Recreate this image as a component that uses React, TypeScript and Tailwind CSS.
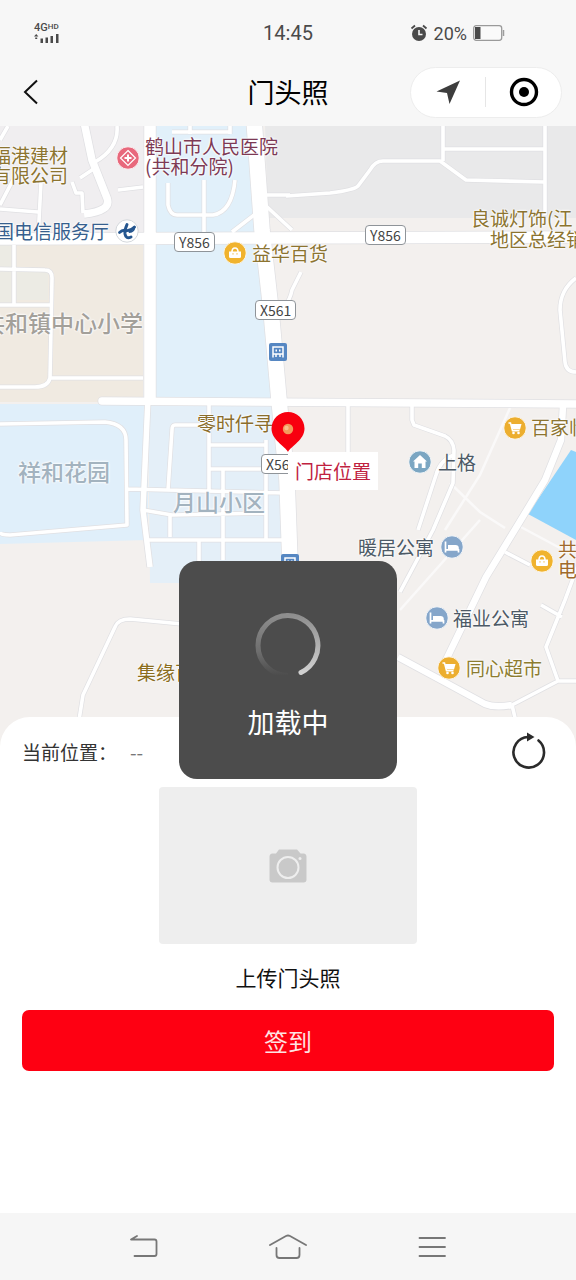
import type { ReactNode } from "react"

type IconKind = "hospital" | "telecom" | "bag" | "cart" | "home" | "bed"

const HALO = "[text-shadow:0_0_2px_#fff,0_0_2px_#fff,0_0_3px_#fff]"

const AREAS = [
  { d: "M265 126H576V218H268Z", fill: "#e9e9ea" },
  { d: "M0 126H145V235H0Z", fill: "#f0eef0" },
  { d: "M0 245H143V402H0Z", fill: "#f0eae1" },
  { d: "M0 245H14V304H0ZM16 272H48V300H16Z", fill: "#ecebe4" },
  { d: "M156 126H250L264 300L275 398H156Z", fill: "#e1f0fa" },
  { d: "M0 404H148V540L0 544Z", fill: "#e0effa" },
  { d: "M148 404H280L288 583H150Z", fill: "#e4eff8" },
  { d: "M571 450L528 514L576 540V452Z", fill: "#8fd3fb" },
]

const THIN_ROADS = [
  "M117 126Q119 148 95 162M95 168L80 178M72 182L76 193H82L83 213M0 209L38 212M41 182L38 240M0 205L13 180M118 190L143 187M0 140L8 126",
  "M0 269L45 270Q52 270 52 278L50 378Q48 387 35 387H0M14 245V305M0 305H50M50 378L143 378",
  "M168 183V205Q170 215 177 215H213Q232 212 235 180M204 180V235M258 212L232 232M265 205L292 230M265 195H290M172 132H230M190 126V134M230 126V134",
  "M285 305Q290 300 292 290L301 272",
  "M286 196L330 193Q354 190 358 186L370 170Q375 161 383 161H440L466 180L544 182M443 126V161M443 149H544M545 126V215",
  "M576 278Q560 290 560 310L565 362Q566 372 576 372",
  "M0 424L105 422Q126 424 126 440L127 525L10 535Q0 535 0 532",
  "M127 489L285 493M143 510L172 515L265 513M205 425H175Q172 425 172 430L168 490M209 402V490M209 445H265M209 469H265M223 470V560M266 440V540M170 515V537M148 540H285M199 540V562",
  "M348 406V452M412 406V420L414 425L445 436Q453 440 454 450L453 483L433 530L400 592M454 455Q440 460 436 475L418 530",
  "M505 552L530 565M541 605L562 617M512 705L516 722M512 705L558 681H576M558 681L546 647L565 600L578 565",
  "M79 720L83 695L115 627Q118 619 130 619L182 624",
]

const PALE_ROADS = "M510 408L480 475L445 530M450 483L480 512L505 528M519 526L560 548M480 520L440 565L400 610"

const LABELS: { text: string; at: string; tone: string }[] = [
  { text: "福港建材\n有限公司", at: "left-[-8px] top-[19px]", tone: "text-[19px] text-[#8c7430]" },
  { text: "鹤山市人民医院\n(共和分院)", at: "left-[145px] top-[10px]", tone: "text-[19px] text-[#7d3a55]" },
  { text: "中国电信服务厅", at: "left-[-24px] top-[95px]", tone: "text-[19px] text-[#365f8e]" },
  { text: "益华百货", at: "left-[252px] top-[117px]", tone: "text-[19px] text-[#8c7430]" },
  { text: "良诚灯饰(江", at: "left-[471px] top-[82px]", tone: "text-[19px] text-[#8c7430]" },
  { text: "地区总经销", at: "left-[490px] top-[103px]", tone: "text-[19px] text-[#8c7430]" },
  { text: "零时仟寻", at: "left-[197px] top-[287px]", tone: "text-[19px] text-[#8a6d2c]" },
  { text: "百家临", at: "left-[531px] top-[291px]", tone: "text-[19px] text-[#8c7430]" },
  { text: "上格", at: "left-[438px] top-[326px]", tone: "text-[19px] text-[#4d5a66]" },
  { text: "暖居公寓", at: "left-[358px] top-[411px]", tone: "text-[19px] text-[#4d5a66]" },
  { text: "福业公寓", at: "left-[453px] top-[482px]", tone: "text-[19px] text-[#4d5a66]" },
  { text: "同心超市", at: "left-[466px] top-[532px]", tone: "text-[19px] text-[#8c7c30]" },
  { text: "共\n电", at: "left-[558px] top-[413px]", tone: "text-[19px] text-[#a06a2c]" },
  { text: "集缘百", at: "left-[137px] top-[536px]", tone: "text-[19px] text-[#8a6d1c]" },
  { text: "共和镇中心小学", at: "left-[-18px] top-[186px]", tone: "text-[23px] font-medium text-[#a3a09a]" },
  { text: "祥和花园", at: "left-[18px] top-[335px]", tone: "text-[23px] font-medium text-[#a3b3bf]" },
  { text: "月山小区", at: "left-[173px] top-[365px]", tone: "text-[23px] font-medium text-[#a3b3bf]" },
]

const POIS: { kind: IconKind; at: string }[] = [
  { kind: "hospital", at: "left-[116px] top-[20px]" },
  { kind: "telecom", at: "left-[115px] top-[93px]" },
  { kind: "bag", at: "left-[223px] top-[115px]" },
  { kind: "cart", at: "left-[503px] top-[290px]" },
  { kind: "home", at: "left-[408px] top-[324px]" },
  { kind: "bed", at: "left-[440px] top-[409px]" },
  { kind: "bag", at: "left-[530px] top-[423px]" },
  { kind: "bed", at: "left-[425px] top-[480px]" },
  { kind: "cart", at: "left-[437px] top-[530px]" },
]

const ROAD_SIGNS = [
  { text: "Y856", at: "left-[174px] top-[106px]" },
  { text: "Y856", at: "left-[365px] top-[99px]" },
  { text: "X561", at: "left-[255px] top-[174px]" },
  { text: "X561", at: "left-[261px] top-[328px]" },
]

const POI_FILL: Record<IconKind, string> = {
  hospital: "#e8687c",
  telecom: "#ffffff",
  bag: "#f0b32e",
  cart: "#ecae2f",
  home: "#7ba6c2",
  bed: "#85a6ca",
}

const POI_GLYPH: Record<IconKind, ReactNode> = {
  hospital: (
    <>
      <path d="M12 4.500L19.500 12L12 19.500L4.500 12Z" fill="#e8687c" stroke="#fff" strokeWidth="1.200" />
      <path d="M12 8.500V15.500M8.500 12H15.500" stroke="#fff" strokeWidth="2" />
    </>
  ),
  telecom: (
    <g fill="none" stroke="#25568f" strokeLinecap="round">
      <path d="M4.500 13.500Q7.500 10.500 11 11.500Q16 12 19.500 8" strokeWidth="2.800" />
      <path d="M12 5.500Q9.500 11 10 15Q11 20.500 16 18" strokeWidth="3" />
      <path d="M19.500 8Q19 13 14.500 13" strokeWidth="1.800" />
    </g>
  ),
  bag: (
    <>
      <path d="M6 10.500H18V15.500Q18 17 16.500 17H7.500Q6 17 6 15.500Z" fill="#fff" />
      <path d="M9 11Q9 7 12 7Q15 7 15 11" fill="none" stroke="#fff" strokeWidth="1.600" />
      <path d="M9.500 12.800H10.500M13.500 12.800H14.500" stroke="#f0b32e" strokeWidth="1.200" />
    </>
  ),
  cart: (
    <>
      <path d="M5.500 7H7.500L9.500 14.800H16.500" fill="none" stroke="#fff" strokeWidth="1.500" />
      <path d="M8 8H18.500L17 13.500H9.500Z" fill="#fff" />
      <circle cx="10.500" cy="17" r="1.300" fill="#fff" />
      <circle cx="15.500" cy="17" r="1.300" fill="#fff" />
    </>
  ),
  home: <path d="M12 5L19 11.500H17.500V18H13.800V13.500H10.200V18H6.500V11.500H5Z" fill="#fff" />,
  bed: (
    <>
      <path d="M5.500 6.500V17.500M5.500 14.800H18.500V17.500" fill="none" stroke="#fff" strokeWidth="1.700" />
      <path d="M8 10H15.500Q18.800 10 18.800 13V14.500H8Z" fill="#fff" />
    </>
  ),
}

function PoiIcon({ kind }: { kind: IconKind }) {
  return (
    <svg viewBox="0 0 24 24" className="size-6">
      <circle cx="12" cy="12" r="11.200" fill={POI_FILL[kind]} stroke={kind === "telecom" ? "#c9ced3" : "#fff"} strokeWidth="0.800" />
      {POI_GLYPH[kind]}
    </svg>
  )
}

function BusStop() {
  return (
    <svg viewBox="0 0 18 18" className="size-[18px]">
      <rect width="18" height="18" rx="2" fill="#5687c2" />
      <path d="M4 14.500V4H14V14.500M4 11H14M7 11V14M11 11V14" fill="none" stroke="#fff" strokeWidth="1.500" />
      <path d="M6.500 7.500H8M10 7.500H11.500" stroke="#fff" strokeWidth="1.800" />
    </svg>
  )
}

function MapDrawing() {
  return (
    <svg viewBox="0 126 576 622" preserveAspectRatio="xMinYMin slice" className="size-full" aria-hidden="true">
      <rect y="126" width="576" height="622" fill="#f3f0ee" />
      {AREAS.map((a) => (
        <path key={a.d} d={a.d} fill={a.fill} />
      ))}
      <path d={PALE_ROADS} fill="none" stroke="#faf9f9" strokeWidth="2.500" />
      <g fill="none" stroke="#e0e0e3" strokeLinejoin="round">
        <path d={THIN_ROADS.join("")} strokeWidth="5" />
        <path d="M84 122L92 160L107 198Q112 211 84 214" strokeWidth="9" />
        <path d="M563 406L561 440L545 480L519 523L486 577L446 660M398 657L450 685L485 704Q495 708 512 705" strokeWidth="8" />
        <path d="M148 398L143 510L150 567" strokeWidth="7" />
        <path d="M102 401L576 404" strokeWidth="9" strokeLinecap="round" />
        <path d="M0 239L576 237M150 120V400" strokeWidth="13" />
        <path d="M254 120L262 230L271 310L279 400L287 480L291 590" strokeWidth="17" />
      </g>
      <g fill="none" stroke="#fff" strokeLinejoin="round">
        <path d={THIN_ROADS.join("")} strokeWidth="3.600" />
        <path d="M84 122L92 160L107 198Q112 211 84 214" strokeWidth="7.500" />
        <path d="M563 406L561 440L545 480L519 523L486 577L446 660M398 657L450 685L485 704Q495 708 512 705" strokeWidth="6.500" />
        <path d="M148 398L143 510L150 567" strokeWidth="5.500" />
        <path d="M102 401L576 404" strokeWidth="7.500" strokeLinecap="round" />
        <path d="M0 239L576 237M150 120V400" strokeWidth="11.500" />
        <path d="M254 120L262 230L271 310L279 400L287 480L291 590" strokeWidth="15.500" />
      </g>
    </svg>
  )
}

function StoreMap() {
  return (
    <section aria-label="地图" className="relative h-[622px] overflow-hidden bg-[#f3f0ee]">
      <MapDrawing />
      <div className="absolute left-[269px] top-[217px]"><BusStop /></div>
      <div className="absolute left-[281px] top-[428px]"><BusStop /></div>
      {LABELS.map((l) => (
        <span key={l.text} className={`absolute whitespace-pre leading-5 ${HALO} ${l.at} ${l.tone}`}>
          {l.text}
        </span>
      ))}
      {POIS.map((p) => (
        <div key={p.at} className={`absolute ${p.at}`}>
          <PoiIcon kind={p.kind} />
        </div>
      ))}
      {ROAD_SIGNS.map((s) => (
        <span
          key={s.at}
          className={`absolute rounded-[4px] border border-[#8f9499] bg-white px-1 text-[14px] leading-[18px] text-[#444] ${s.at}`}
        >
          {s.text}
        </span>
      ))}
      <span className="absolute left-[288px] top-[326px] bg-white px-[7px] text-[19px] leading-[38px] text-[#c0213f]">
        门店位置
      </span>
      <svg viewBox="0 0 34 40" className="absolute left-[271px] top-[286px] h-10 w-[34px]">
        <path d="M17 40C14 34 0.500 28 0.500 16.500A16.500 16.500 0 0 1 33.500 16.500C33.500 28 20 34 17 40Z" fill="#f8000f" />
        <circle cx="17" cy="17" r="5.200" fill="#f39a5c" />
        <circle cx="15.500" cy="16" r="2.200" fill="#f9c08d" />
      </svg>
    </section>
  )
}

function StatusBar() {
  return (
    <div className="grid h-[58px] grid-cols-3 items-center px-[34px] pt-2 text-[#4a4a4a]">
      <div className="flex w-7 flex-col">
        <span className="flex items-start font-[Roboto] text-[11px] font-medium leading-[10px]">
          4G<sup className="top-0 text-[8px] leading-[8px]">HD</sup>
        </span>
        <svg viewBox="0 0 26 10" className="h-[10px] w-[26px]" fill="#4a4a4a">
          <path d="M0 3.500L2.200 1L4.400 3.500ZM1.200 4.500H3.200V6H1.200ZM6.500 5.500H9V10H6.500ZM11.500 4.500H14V10H11.500ZM16.500 3H19V10H16.500ZM22 1H24.500V10H22Z" />
        </svg>
      </div>
      <span className="text-center font-[Roboto] text-[20px]">14:45</span>
      <div className="flex items-center justify-end gap-[6px] pr-[37px]">
        <svg viewBox="0 0 18 18" className="size-[18px]">
          <circle cx="9" cy="10" r="7" fill="#4a4a4a" />
          <path d="M1.500 4.500L5 1.500M16.500 4.500L13 1.500" stroke="#4a4a4a" strokeWidth="1.800" />
          <path d="M9 6V10.500H12.500" fill="none" stroke="#f7f7f7" strokeWidth="1.600" />
        </svg>
        <span className="font-[Roboto] text-[18px]">20%</span>
        <svg viewBox="0 0 32 16" className="h-4 w-8">
          <rect x="0.700" y="0.700" width="28" height="14.600" rx="2.500" fill="#fafafa" stroke="#9a9a9a" strokeWidth="1.300" />
          <path d="M30.500 5V11" stroke="#9d9d9d" strokeWidth="1.500" />
          <rect x="2" y="2" width="5.500" height="12" fill="#4a4a4a" />
        </svg>
      </div>
    </div>
  )
}

function TitleBar() {
  return (
    <header className="grid h-[68px] grid-cols-[1fr_auto_1fr] items-center px-[14px]">
      <button type="button" aria-label="返回" className="ml-[6px] w-6">
        <svg viewBox="0 0 24 28" className="h-7 w-6">
          <path d="M17 2.500L5 14L17 25.500" fill="none" stroke="#111" strokeWidth="2" />
        </svg>
      </button>
      <h1 className="text-[27px] leading-9 text-black">门头照</h1>
      <div className="flex h-[51px] w-[152px] items-center justify-self-end rounded-full border border-[#ededed] bg-white">
        <button type="button" aria-label="定位" className="flex flex-1 justify-center">
          <svg viewBox="0 0 24 24" className="size-6">
            <path d="M24 0.500L13.500 24L11 13L0.500 11.500Z" fill="#3d3d3d" />
          </svg>
        </button>
        <span className="h-[30px] w-px bg-[#e6e6e6]" />
        <button type="button" aria-label="关闭" className="flex flex-1 justify-center pl-[2px]">
          <svg viewBox="0 0 30 30" className="size-[30px]">
            <circle cx="15" cy="15" r="12.500" fill="none" stroke="#000" strokeWidth="3.400" />
            <circle cx="15" cy="15" r="5" fill="#000" />
          </svg>
        </button>
      </div>
    </header>
  )
}

function CheckInSheet() {
  return (
    <section className="relative -mt-[31px] flex flex-col items-center rounded-t-[30px] bg-white px-[22px]">
      <div className="flex h-[70px] w-full items-center text-[19px] text-[#333]">
        <span>当前位置：</span>
        <span className="ml-[13px] text-[#777]">--</span>
        <button type="button" aria-label="刷新" className="ml-auto mr-[7px]">
          <svg viewBox="0 0 36 40" className="h-10 w-9">
            <path d="M27.500 8.500A15.300 15.300 0 1 1 17 5" fill="none" stroke="#2b2b2b" strokeWidth="2.600" strokeLinecap="round" />
            <path d="M16 0.500L23.500 5L16 9.500Z" fill="#2b2b2b" />
          </svg>
        </button>
      </div>
      <button type="button" aria-label="拍照" className="flex h-[157px] w-[258px] items-center justify-center rounded-[4px] bg-[#eee]">
        <svg viewBox="0 0 38 34" className="h-[34px] w-[38px]">
          <path d="M3.500 4.500H7L10 0.500H28L31.500 4.500H34.500Q37.500 4.500 37.500 8V30.500Q37.500 33.500 34.500 33.500H3.500Q0.500 33.500 0.500 30.500V8Q0.500 4.500 3.500 4.500Z" fill="#c9c9c9" />
          <circle cx="19" cy="18.500" r="10.500" fill="none" stroke="#eee" strokeWidth="2" />
          <circle cx="31" cy="9.500" r="1.500" fill="#eee" />
        </svg>
      </button>
      <p className="pb-[18px] pt-[18px] text-[21px] leading-[30px] text-[#111]">上传门头照</p>
      <button type="button" className="h-[61px] w-full rounded-[7px] bg-[#fe0012] text-[24px] text-[#ffe3e3]">
        签到
      </button>
    </section>
  )
}

function LoadingToast() {
  return (
    <div role="status" className="absolute inset-0 flex items-center justify-center">
      <div className="flex size-[218px] flex-col items-center rounded-[18px] bg-[#4c4c4c] pt-[51px]">
        <svg viewBox="0 0 66 66" className="size-[66px]" fill="none" strokeWidth="5">
          <defs>
            <linearGradient id="spin-dim" x1="0" y1="0" x2="0" y2="1">
              <stop offset="0" stopColor="#8e8e8e" />
              <stop offset="0.600" stopColor="#6e6e6e" />
              <stop offset="1" stopColor="#4c4c4c" />
            </linearGradient>
            <linearGradient id="spin-lit" x1="0" y1="0" x2="0" y2="1">
              <stop offset="0" stopColor="#8e8e8e" />
              <stop offset="1" stopColor="#d0d0d0" />
            </linearGradient>
          </defs>
          <path d="M33 63.500A30 30 0 0 1 33 3.500" stroke="url(#spin-dim)" />
          <path d="M33 3.500A30 30 0 0 1 46 60.500" stroke="url(#spin-lit)" strokeLinecap="round" />
        </svg>
        <span className="mt-[26px] text-[27px] leading-9 text-white">加载中</span>
      </div>
    </div>
  )
}

function SystemNav() {
  return (
    <nav className="flex h-[67px] items-center justify-center gap-[106px] bg-[#f6f6f6]">
      <button type="button" aria-label="后退">
        <svg viewBox="0 0 38 28" className="h-7 w-[38px]" fill="none" stroke="#777" strokeWidth="1.800" strokeLinecap="round" strokeLinejoin="round">
          <path d="M12 3L6 6.500H29.500Q31.500 6.500 31.500 8.500V21Q31.500 23 29.500 23H9.500" />
        </svg>
      </button>
      <button type="button" aria-label="主页">
        <svg viewBox="0 0 38 28" className="h-7 w-[38px]" fill="none" stroke="#777" strokeWidth="1.800" strokeLinecap="round" strokeLinejoin="round">
          <path d="M1 12L17 3Q19 2 21 3L37 12M7.500 15V22Q7.500 25 10.500 25H27.500Q30.500 25 30.500 22V15" />
        </svg>
      </button>
      <button type="button" aria-label="菜单">
        <svg viewBox="0 0 38 28" className="h-7 w-[38px]" stroke="#777" strokeWidth="1.800" strokeLinecap="round">
          <path d="M6.500 5H32M6.500 14H32M6.500 23H32" />
        </svg>
      </button>
    </nav>
  )
}

export default function App() {
  return (
    <div className="flex min-h-screen flex-col overflow-hidden bg-[#f7f7f7] font-['Noto_Sans_CJK_SC',sans-serif]">
      <StatusBar />
      <TitleBar />
      <main className="relative flex-1 bg-white">
        <StoreMap />
        <CheckInSheet />
        <LoadingToast />
      </main>
      <SystemNav />
    </div>
  )
}
